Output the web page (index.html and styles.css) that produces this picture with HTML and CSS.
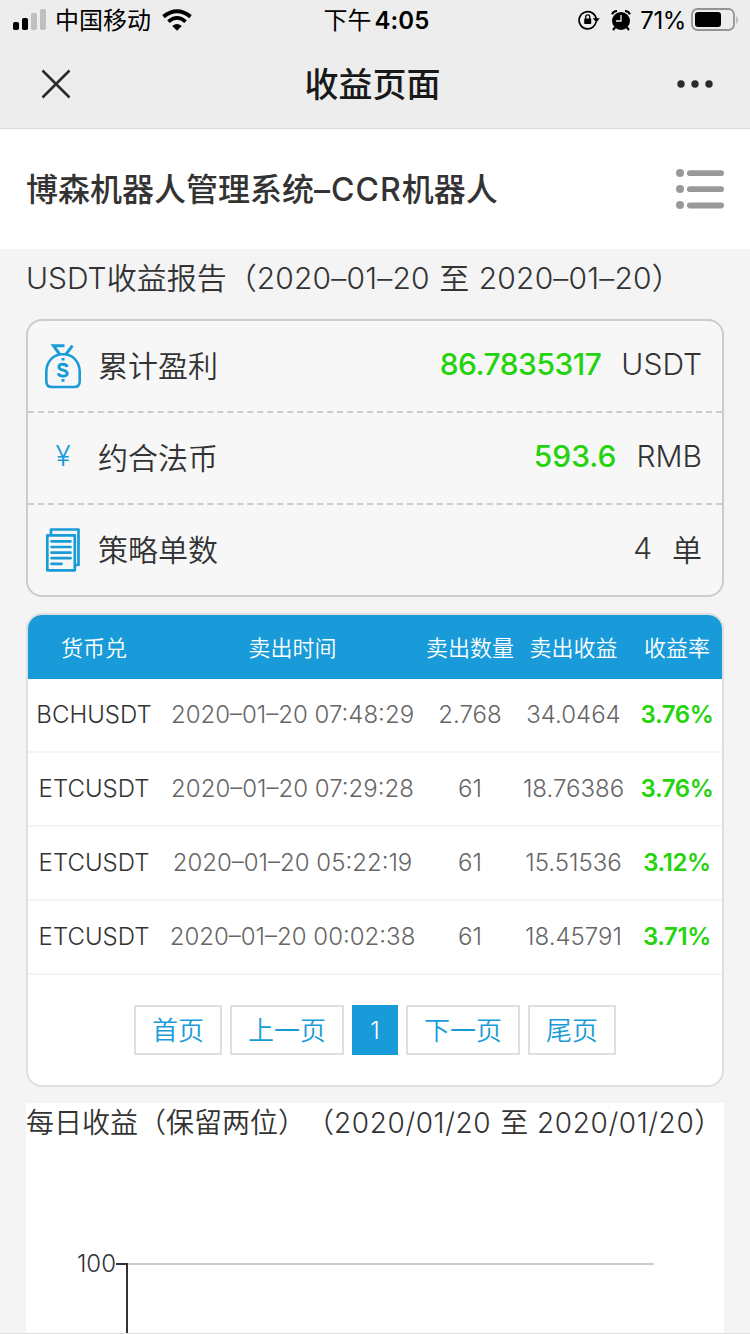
FILE: index.html
```
<!DOCTYPE html>
<html lang="zh-CN">
<head>
  <meta charset="UTF-8">
  <title>收益页面</title>
  <link rel="stylesheet" href="styles.css">
</head>
<body>
  <div class="top">
    <div class="status">
      <div class="status-left">
        <svg class="signal" width="34" height="22" viewBox="0 0 34 22">
          <rect x="0" y="13" width="6" height="8" rx="1.8"/>
          <rect x="9" y="9" width="6" height="12" rx="1.8"/>
          <rect x="18" y="4" width="6" height="17" rx="1.8" fill="#bfbfbf"/>
          <rect x="27" y="0" width="6" height="21" rx="1.8" fill="#bfbfbf"/>
        </svg>
        <span class="carrier">中国移动</span>
        <svg class="wifi" width="30" height="22" viewBox="0 0 30 22">
          <path d="M1.500 7.600Q15-3.200 28.500 7.600" fill="none" stroke="#000" stroke-width="4"/>
          <path d="M6.400 12.600Q15 5.200 23.600 12.600" fill="none" stroke="#000" stroke-width="3.800"/>
          <path d="M10.200 17Q15 13 19.800 17L15 21.800Z"/>
        </svg>
      </div>
      <div class="time"><span class="ampm">下午</span>4:05</div>
      <div class="status-right">
        <svg width="22" height="20" viewBox="0 0 22 20">
          <path d="M15.800 16.300A8.600 8.600 0 1 1 18.200 9" fill="none" stroke="#000" stroke-width="1.700"/>
          <path d="M14.800 8.200h7l-3.500 4.300z"/>
          <path d="M18.100 12Q17.300 15 15.200 16.800" fill="none" stroke="#000" stroke-width="1.500"/>
          <rect x="6.200" y="8.500" width="7" height="5.500" rx=".8"/>
          <path d="M7.700 9V6.800a2 2 0 0 1 4 0V9" fill="none" stroke="#000" stroke-width="1.300"/>
        </svg>
        <svg class="alarm" width="20" height="21" viewBox="0 0 20 21">
          <circle cx="10" cy="11" r="9"/>
          <path d="M1 4.200Q2.500 1 6 1M19 4.200Q17.500 1 14 1M4 17.500L2 20M16 17.500l2 2.500" fill="none" stroke="#000" stroke-width="2.200"/>
          <path d="M10 5v6H5" fill="none" stroke="#eee" stroke-width="1.300"/>
        </svg>
        <span class="percent">71%</span>
        <svg class="battery" width="49" height="24" viewBox="0 0 49 24">
          <rect x="1" y="1" width="42" height="21" rx="5.500" fill="none" stroke="#949494" stroke-width="1.800"/>
          <rect x="4" y="4" width="26" height="15" rx="3"/>
          <path d="M45.500 8q2.400 3.500 0 8z" fill="#949494"/>
        </svg>
      </div>
    </div>
    <div class="navbar">
      <svg class="close" width="30" height="30" viewBox="0 0 30 30">
        <path d="M1.500 1.500l27 27M28.500 1.500l-27 27" stroke="#2b2b2b" stroke-width="2.600"/>
      </svg>
      <h1>收益页面</h1>
      <svg class="more" width="38" height="10" viewBox="0 0 38 10" fill="#2b2b2b">
        <circle cx="5" cy="5" r="3.700"/>
        <circle cx="19" cy="5" r="3.700"/>
        <circle cx="33" cy="5" r="3.700"/>
      </svg>
    </div>
  </div>

  <div class="header">
    <h2>博森机器人管理系统<span class="latin">–CCR</span>机器人</h2>
    <svg width="48" height="40" viewBox="0 0 48 40" fill="#999">
      <circle cx="4" cy="4" r="4"/><rect x="11" y="1.200" width="37" height="5.800" rx="2.800"/>
      <circle cx="4" cy="20" r="4"/><rect x="11" y="17.300" width="37" height="5.800" rx="2.800"/>
      <circle cx="4" cy="36" r="4"/><rect x="11" y="33.600" width="37" height="5.800" rx="2.800"/>
    </svg>
  </div>

  <div class="content">
    <p class="report-title">USDT收益报告（<span class="date">2020–01–20</span> 至 <span class="date">2020–01–20</span>）</p>

    <div class="summary">
      <div class="row">
        <div class="icon">
          <svg width="38" height="46" viewBox="0 0 38 46" fill="none" stroke="#189bd8" stroke-width="2.600">
            <path d="M19 11.200C8 11.200 2.300 20 2.300 29v9.200q0 5.800 5.800 5.800h21.800q5.800 0 5.800-5.800V29C35.700 20 30 11.200 19 11.200Z"/>
            <path d="M15.500 11L9.500 2.800h11M22 11.200L28.500 2.600" stroke-width="3"/>
            <path d="M19 15v2.600M19 36v2.800" stroke-width="3"/>
            <path d="M23.200 24C22.500 20.300 15 20.200 14.900 24C14.900 28 23.300 26.400 23.300 30.500C23.300 34.200 14.800 34 14.300 30.300" stroke-width="2.900"/>
          </svg>
        </div>
        <span class="name">累计盈利</span>
        <span class="value green profit">86.7835317</span>
        <span class="unit">USDT</span>
      </div>
      <div class="row">
        <div class="icon"><span class="yen">¥</span></div>
        <span class="name">约合法币</span>
        <span class="value green">593.6</span>
        <span class="unit rmb">RMB</span>
      </div>
      <div class="row">
        <div class="icon">
          <svg width="36" height="44" viewBox="0 0 36 44" fill="none" stroke="#189bd8" stroke-width="2.700" stroke-linejoin="round">
            <path d="M6 6V1.500h27.500v35.500H30"/>
            <rect x="2.300" y="7.300" width="27.500" height="35"/>
            <path d="M6.500 13.300h19M6.500 19h19M6.500 24.700h19M6.500 30.200h19M6.500 35.800h10" stroke-linecap="round"/>
          </svg>
        </div>
        <span class="name">策略单数</span>
        <span class="value">4</span>
        <span class="unit">单</span>
      </div>
    </div>

    <div class="orders">
      <table>
        <colgroup>
          <col class="c1"><col class="c2"><col class="c3"><col class="c4"><col class="c5">
        </colgroup>
        <thead>
          <tr><th>货币兑</th><th>卖出时间</th><th>卖出数量</th><th>卖出收益</th><th>收益率</th></tr>
        </thead>
        <tbody>
          <tr><td>BCHUSDT</td><td>2020–01–20 07:48:29</td><td>2.768</td><td>34.0464</td><td>3.76%</td></tr>
          <tr><td>ETCUSDT</td><td>2020–01–20 07:29:28</td><td>61</td><td>18.76386</td><td>3.76%</td></tr>
          <tr><td>ETCUSDT</td><td>2020–01–20 05:22:19</td><td>61</td><td>15.51536</td><td>3.12%</td></tr>
          <tr><td>ETCUSDT</td><td>2020–01–20 00:02:38</td><td>61</td><td>18.45791</td><td>3.71%</td></tr>
        </tbody>
      </table>
      <div class="pager">
        <a>首页</a>
        <a>上一页</a>
        <a class="current">1</a>
        <a>下一页</a>
        <a>尾页</a>
      </div>
    </div>

    <div class="daily">
      <p class="daily-title">每日收益（保留两位）（<span class="date">2020/01/20</span> 至 <span class="date">2020/01/20</span>）</p>
      <svg class="chart" width="698" height="189" viewBox="0 0 698 189">
        <path d="M102 120h526" stroke="#ccc" stroke-width="2"/>
        <path d="M90 120h12M101 119v70" stroke="#333" stroke-width="2" fill="none"/>
        <text x="90" y="127.500" text-anchor="end">100</text>
      </svg>
    </div>
  </div>
</body>
</html>
```
FILE: styles.css
```
* {
  margin: 0;
  padding: 0;
  box-sizing: border-box;
}

body {
  height: 1334px;
  overflow: hidden;
  font-family: Inter, "Noto Sans CJK SC", sans-serif;
  font-weight: 350;
  text-spacing-trim: space-all;
  background: #f4f4f4;
  color: #333;
  border-bottom: 1px solid #dfdfdf;
}

svg {
  display: block;
  flex: none;
}

.top {
  height: 129px;
  background: #ededed;
  border-bottom: 1px solid #d9d9d9;
  color: #000;
}

.status {
  height: 40px;
  padding: 0 10px 0 13px;
  display: grid;
  grid-template-columns: 1fr auto 1fr;
  align-items: center;
  font-size: 24px;
  font-weight: 400;
  line-height: 40px;
}

.status-left,
.status-right {
  display: flex;
  align-items: center;
}

.status-right {
  justify-content: flex-end;
}

.carrier {
  margin: 0 11px 0 8px;
  padding-top: 2px;
  line-height: 38px;
}

.time {
  padding-top: 2px;
  line-height: 38px;
  font-weight: 600;
  letter-spacing: 0.1px;
}

.ampm {
  font-weight: 400;
  letter-spacing: 0;
  margin-right: 3px;
}

.alarm {
  margin: 0 9px 0 11px;
}

.percent {
  padding-top: 2px;
  line-height: 38px;
  margin-right: 5px;
  letter-spacing: -0.4px;
}

.navbar {
  height: 88px;
  padding: 0 36px 0 41px;
  display: grid;
  grid-template-columns: 1fr auto 1fr;
  align-items: center;
}

.navbar h1 {
  margin-right: 10px;
  padding-bottom: 4px;
  font-size: 34px;
  font-weight: 500;
  color: #191919;
}

.more {
  justify-self: end;
}

.header {
  height: 120px;
  padding: 0 26px;
  display: flex;
  align-items: center;
  justify-content: space-between;
  background: #fff;
}

.header h2 {
  padding-bottom: 5px;
  font-size: 32px;
  font-weight: 500;
}

.latin {
  letter-spacing: 1px;
}

.content {
  padding: 0 26px;
}

.report-title {
  height: 70px;
  line-height: 59px;
  font-size: 30px;
  word-spacing: 1px;
  white-space: nowrap;
}

.report-title .date {
  letter-spacing: 0.2px;
}

.summary {
  border: 2px solid #ccc;
  border-radius: 16px;
  background: #f7f7f7;
}

.row {
  height: 92px;
  padding: 0 20px 0 16px;
  display: flex;
  align-items: center;
  font-size: 30px;
  border-bottom: 2px dashed #ccc;
}

.row:last-child {
  height: 90px;
  border-bottom: 0;
}

.row span {
  padding-bottom: 4px;
}

.icon {
  width: 38px;
  margin-right: 16px;
  display: flex;
  justify-content: center;
}

.yen {
  color: #189bd8;
  font-size: 28px;
  font-weight: 300;
}

.value {
  margin-left: auto;
  margin-right: 20px;
}

.green {
  color: #23d30b;
  font-weight: 500;
}

.profit {
  letter-spacing: -0.5px;
}

.orders {
  height: 474px;
  margin-top: 16px;
  border: 2px solid #dfdfdf;
  border-radius: 16px;
  background: #fff;
  overflow: hidden;
}

table {
  width: 694px;
  table-layout: fixed;
  border-collapse: separate;
  border-spacing: 0;
}

.c1 { width: 132px; }
.c2 { width: 265px; }
.c3 { width: 90px; }
.c4 { width: 117px; }
.c5 { width: 90px; }

th {
  height: 64px;
  padding-bottom: 3px;
  background: #189bd8;
  color: #fff;
  font-size: 22px;
  font-weight: 350;
  white-space: nowrap;
}

td {
  height: 74px;
  padding-bottom: 1px;
  border-bottom: 2px solid #f4f4f4;
  font-size: 24px;
  text-align: center;
  color: #666;
  white-space: nowrap;
}

td:first-child {
  color: #333;
}

td:last-child {
  color: #23d30b;
  font-weight: 600;
  letter-spacing: -0.4px;
}

.pager {
  margin-top: 30px;
  display: flex;
  justify-content: center;
  gap: 8px;
}

.pager a {
  height: 50px;
  padding: 0 16px;
  border: 2px solid #dfdfdf;
  color: #189bd8;
  font-size: 26px;
  line-height: 47px;
}

.pager .current {
  width: 46px;
  padding: 0;
  text-align: center;
  background: #189bd8;
  border-color: #189bd8;
  color: #fff;
  font-size: 24px;
}

.daily {
  height: 230px;
  margin-top: 16px;
  background: #fff;
}

.daily-title {
  height: 41px;
  line-height: 41px;
  font-size: 28px;
  word-spacing: 1px;
  white-space: nowrap;
}

.daily-title .date {
  letter-spacing: 0.6px;
}

.chart text {
  font-size: 24px;
  fill: #333;
}
```
